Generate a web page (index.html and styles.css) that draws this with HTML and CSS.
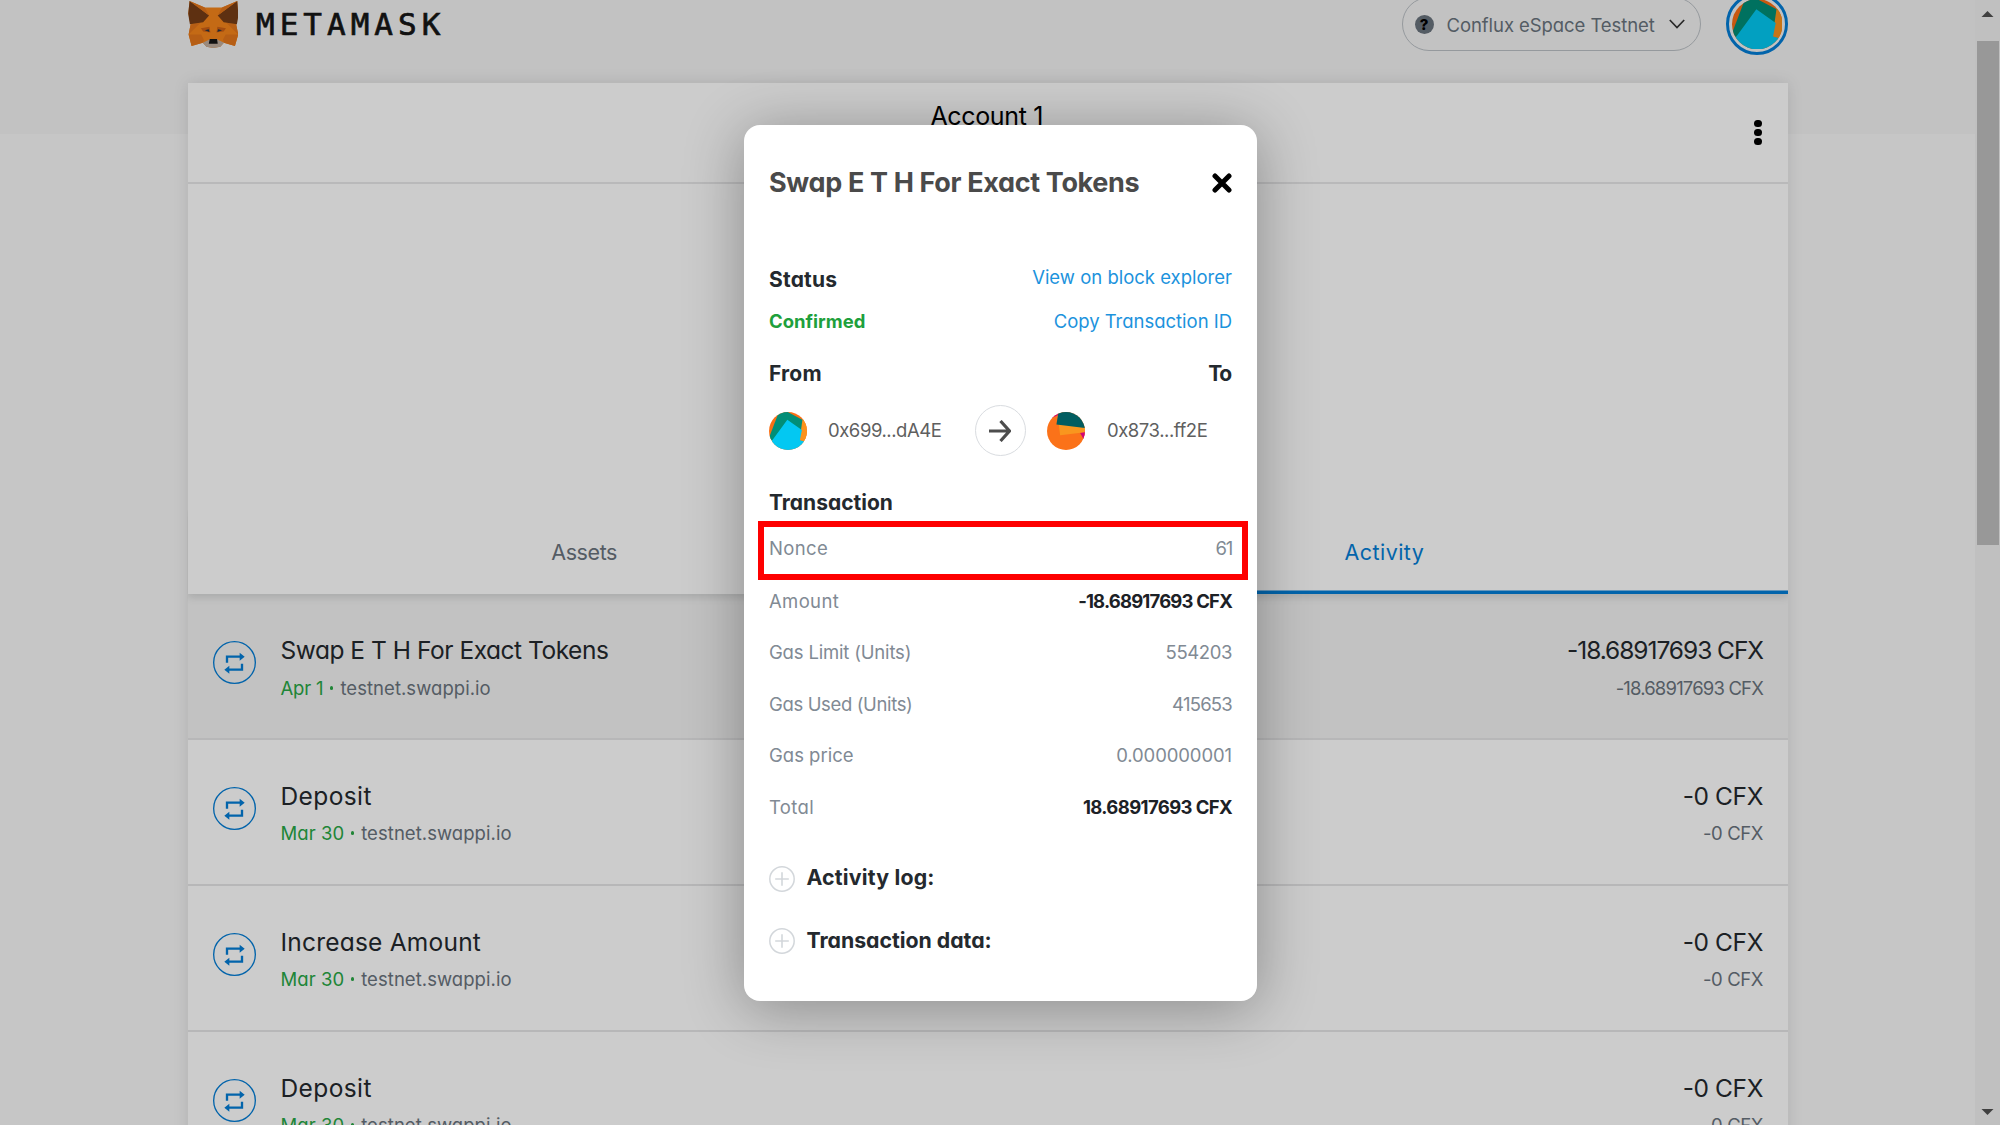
FILE: index.html
```html
<!DOCTYPE html>
<html lang="en">
<head>
<meta charset="utf-8">
<title>MetaMask</title>
<link rel="stylesheet" href="styles.css">
</head>
<body>
<svg width="0" height="0" class="defs">
  <symbol id="swap" viewBox="129 362 129 129">
    <circle cx="193.5" cy="426.5" r="62.5" fill="none" stroke="currentColor" stroke-width="4"/>
    <path d="M171 427V409H213M216 430V448H174" fill="none" stroke="currentColor" stroke-width="7"/>
    <path d="M209 397L224 409L209 421ZM178 436L163 448L178 460Z" fill="currentColor"/>
  </symbol>
  <symbol id="jazz-a" viewBox="86 155 112 112">
    <clipPath id="ca"><circle cx="142" cy="211" r="56"/></clipPath>
    <g clip-path="url(#ca)">
      <path fill="#fb6f14" d="M86 155h112v112H86z"/>
      <path fill="#018e77" d="M84 236L112 163L128 148L187 179L184 215L98 240Z"/>
      <path fill="#fb931d" d="M185 175L205 182L195 243L176 238Z"/>
      <path fill="#03c8f2" d="M140 178L183 208L177 238L198 244V270H86V250L99 234Z"/>
    </g>
  </symbol>
  <symbol id="jazz-b" viewBox="908 155 113 113">
    <clipPath id="cb"><circle cx="964.5" cy="211.5" r="56.5"/></clipPath>
    <g clip-path="url(#cb)">
      <path fill="#fb7219" d="M900 150h130v130H900z"/>
      <path fill="#d10575" d="M915 160L945 150L940 165L924 172ZM1006 217L1025 212L1017 236Z"/>
      <path fill="#f9961e" d="M943 190L1025 200V215L947 224Z"/>
      <path fill="#015d60" d="M943 150L936 192L1025 203V150Z"/>
    </g>
  </symbol>
  <symbol id="plus" viewBox="0 0 26 26">
    <circle cx="13" cy="13" r="12.2" fill="none" stroke="currentColor" stroke-width="1.5"/>
    <path d="M13 6.2V19.8M6.2 13H19.8" stroke="currentColor" stroke-width="1.6"/>
  </symbol>
</svg>

<div class="page">
  <header class="topbar">
    <svg class="fox" viewBox="53 2 151 142">
      <path fill="#f6851b" d="M57 2L103 22H155L201 2L204 40L198 75L204 103L194 138L160 128L150 140L128 144L108 140L97 128L63 138L54 103L60 73L53 40Z"/>
      <path fill="#e4761b" d="M60 73L90 68L54 103ZM198 73L168 68L204 103ZM54 103H92L100 118L97 128L63 138ZM204 103H166L158 118L161 128L194 138Z"/>
      <path fill="#cd6116" d="M91 84L117 80L120 97L98 94ZM167 84L141 80L138 97L160 94Z"/>
      <path fill="#763d16" d="M57 2L116 46L98 66L58 72L55 55L53 40ZM201 2L142 46L160 66L200 72L203 55L204 40Z"/>
      <path fill="#e4761b" d="M57 2L103 22L116 46ZM201 2L155 22L142 46Z"/>
      <path fill="#c0ad9e" d="M97 128L117 118H141L161 128L150 140L128 144L108 140Z"/>
      <path fill="#233447" d="M103 90L115 87L117 96ZM155 90L143 87L141 96Z"/>
      <path fill="#161616" d="M118 117H140L142 131H115Z"/>
    </svg>
    <span class="wordmark">METAMASK</span>
    <div class="network">
      <span class="network-icon">?</span>
      <span class="network-name">Conflux eSpace Testnet</span>
      <svg class="chevron" viewBox="0 0 16 10"><path d="M.8 1L8 8.6L15.2 1" fill="none" stroke="#333" stroke-width="1.7"/></svg>
    </div>
    <div class="account-ring"><svg><use href="#jazz-a"/></svg></div>
  </header>

  <main class="card">
    <div class="account-bar">
      <span class="account-name">Account 1</span>
      <span class="dots"><i></i><i></i><i></i></span>
    </div>
    <div class="balance"></div>
    <div class="tabs">
      <div class="tab assets">Assets</div>
      <div class="tab activity">Activity</div>
    </div>
    <div class="list">
      <div class="row hovered">
        <svg class="row-icon"><use href="#swap"/></svg>
        <div class="row-main"><div class="title tight">Swap E T H For Exact Tokens</div><div class="sub"><span class="date narrow">Apr 1</span><b></b>testnet.swappi.io</div></div>
        <div class="row-amount digits"><div class="title">-18.68917693 CFX</div><div class="sub">-18.68917693 CFX</div></div>
      </div>
      <div class="row">
        <svg class="row-icon"><use href="#swap"/></svg>
        <div class="row-main"><div class="title">Deposit</div><div class="sub"><span class="date">Mar 30</span><b></b>testnet.swappi.io</div></div>
        <div class="row-amount"><div class="title">-0 CFX</div><div class="sub">-0 CFX</div></div>
      </div>
      <div class="row">
        <svg class="row-icon"><use href="#swap"/></svg>
        <div class="row-main"><div class="title increase">Increase Amount</div><div class="sub"><span class="date">Mar 30</span><b></b>testnet.swappi.io</div></div>
        <div class="row-amount"><div class="title">-0 CFX</div><div class="sub">-0 CFX</div></div>
      </div>
      <div class="row">
        <svg class="row-icon"><use href="#swap"/></svg>
        <div class="row-main"><div class="title">Deposit</div><div class="sub"><span class="date">Mar 30</span><b></b>testnet.swappi.io</div></div>
        <div class="row-amount"><div class="title">-0 CFX</div><div class="sub">-0 CFX</div></div>
      </div>
    </div>
  </main>
</div>

<div class="scrollbar">
  <svg viewBox="0 0 12 6"><path d="M6 0L12 6H0Z"/></svg>
  <div class="thumb"></div>
  <svg viewBox="0 0 12 6"><path d="M0 0H12L6 6Z"/></svg>
</div>

<div class="backdrop"></div>

<section class="modal">
  <div class="modal-head">
    <h2>Swap E T H For Exact Tokens</h2>
    <svg class="close" viewBox="0 0 20 20"><path d="M3 3L17 17M17 3L3 17" stroke="#000" stroke-width="5" stroke-linecap="round"/></svg>
  </div>
  <div class="line status"><strong>Status</strong><a>View on block explorer</a></div>
  <div class="line confirm"><span class="ok">Confirmed</span><a class="copy">Copy Transaction ID</a></div>
  <div class="line fromto"><strong>From</strong><strong class="to">To</strong></div>
  <div class="parties">
    <svg class="jazz"><use href="#jazz-a"/></svg>
    <span class="address">0x699...dA4E</span>
    <span class="arrow"><svg viewBox="0 0 22 22"><path d="M0 11H20M11.5 1L20.5 11L11.5 21" fill="none" stroke="#4d4d4d" stroke-width="3.2"/></svg></span>
    <svg class="jazz"><use href="#jazz-b"/></svg>
    <span class="address">0x873...ff2E</span>
  </div>
  <div class="line section"><strong>Transaction</strong></div>
  <div class="item nonce"><span class="wide">Nonce</span><span class="v61">61</span></div>
  <div class="item"><span class="wide">Amount</span><span class="bold">-18.68917693 CFX</span></div>
  <div class="item"><span class="gas">Gas Limit (Units)</span><span class="limit">554203</span></div>
  <div class="item"><span class="gas used">Gas Used (Units)</span><span class="used-value">415653</span></div>
  <div class="item"><span>Gas price</span><span class="price-value">0.000000001</span></div>
  <div class="item"><span class="wide">Total</span><span class="bold total">18.68917693 CFX</span></div>
  <div class="folds">
    <div class="fold"><svg><use href="#plus"/></svg><strong>Activity log:</strong></div>
    <div class="fold"><svg><use href="#plus"/></svg><strong class="data">Transaction data:</strong></div>
  </div>
  <div class="highlight"></div>
</section>
</body>
</html>
```
FILE: styles.css
```css
* { box-sizing: border-box; }
html, body { margin: 0; height: 1125px; overflow: hidden; }
body {
  position: relative;
  background: linear-gradient(#f3f3f3 134px, #f8f8f8 134px);
  font-family: Inter, "Liberation Sans", sans-serif;
  font-feature-settings: "cv11";
  font-size: 18.5px;
  color: #24292e;
}
.defs { position: absolute; }
svg { display: block; flex: none; }

.page { width: 1975px; height: 1125px; overflow: hidden; padding: 0 187px 0 187.5px; }

.topbar { display: flex; align-items: center; height: 48px; margin-bottom: 35px; }
.fox { width: 50.5px; height: 47px; }
.wordmark { margin-left: 18px; font: 31px/49px "DejaVu Sans Mono", monospace; letter-spacing: 5px; color: #161616; -webkit-text-stroke: .7px #161616; flex: 1; }
.network {
  display: flex; align-items: center; width: 299px; height: 54px; margin-right: 25px; flex: none;
  padding: 0 15px 0 12px; border: 1.5px solid #bbc0c5; border-radius: 27px; color: #6a737d;
}
.network-icon { width: 19px; height: 19px; border-radius: 50%; background: #6a737d; color: #000; font-size: 15px; font-weight: 800; line-height: 19px; text-align: center; margin-right: 13px; }
.network-name { letter-spacing: -.07px; white-space: nowrap; flex: 1; padding-top: 1px; }
.chevron { width: 16px; height: 10px; }
.account-ring { width: 62.5px; height: 62.5px; flex: none; margin: -8px 0; border: 3px solid #037dd6; border-radius: 50%; padding: 3px; background: #f3f3f3; }
.account-ring svg { width: 50.5px; height: 50.5px; }

.card { width: 1600.5px; height: 1060px; background: #fff; box-shadow: 0 0 14px rgba(36, 41, 46, .13); }
.account-bar { display: grid; grid-template-columns: 60px 1fr 60px; align-items: center; height: 101px; border-bottom: 2px solid #e8e8e9; }
.account-name { grid-column: 2; padding-bottom: 32.5px; text-align: center; font-size: 25px; letter-spacing: -.35px; color: #000; position: relative; left: -1px; }
.dots { display: flex; flex-direction: column; gap: 1.4px; align-items: center; }
.dots i { width: 7.3px; height: 7.3px; border-radius: 50%; background: #000; }
.balance { height: 326px; }
.tabs { display: flex; height: 84px; position: relative; box-shadow: 0 3px 8px rgba(36, 41, 46, .16); clip-path: inset(0 0 -16px 0); }
.tab { flex: 1; text-align: center; font-size: 21.5px; line-height: 84px; color: #6a737d; padding-right: 7px; }
.assets { letter-spacing: -.42px; }
.activity { letter-spacing: .45px; color: #037dd6; box-shadow: inset 0 -3.5px #037dd6; }

.row { display: flex; height: 146px; border-bottom: 2px solid #e5e5e6; padding: 0 25px; }
.hovered { background: #f3f3f3; }
.row-icon { width: 43px; height: 43px; margin: 46.5px 25px 0 0; color: #037dd6; }
.row-main, .row-amount { padding-top: 37px; line-height: 38px; }
.row-main { flex: 1; }
.row-amount { text-align: right; }
.title { font-size: 24.5px; letter-spacing: .4px; }
.title.tight { letter-spacing: -.47px; }
.title.increase { letter-spacing: .22px; }
.sub { letter-spacing: .05px; color: #6a737d; line-height: 37px; }
.hovered .sub { line-height: 38px; }
.date { color: #28a745; }
.narrow { letter-spacing: -.2px; }
.sub b { display: inline-block; width: 3.6px; height: 3.6px; border-radius: 50%; background: #28a745; margin: 0 7px 5px 6.5px; }
.row-amount .title { letter-spacing: -.4px; }
.row-amount .sub { letter-spacing: -.4px; }
.digits .title { letter-spacing: -1.05px; }
.digits .sub { letter-spacing: -.83px; }

.scrollbar { position: absolute; top: 0; right: 0; width: 25px; height: 1125px; display: flex; flex-direction: column; align-items: center; background: #f1f1f1; padding: 11px 0 10px; }
.scrollbar svg { width: 13px; height: 6px; fill: #505050; }
.thumb { width: 22px; height: 504px; margin: 24px 0 auto; background: #bfbfbf; }

.backdrop { position: absolute; inset: 0; background: rgba(0, 0, 0, .2); }

.modal {
  position: absolute; left: 744px; top: 125px; width: 513px; height: 876px;
  padding: 37.5px 25px 0 25px; border-radius: 16px; background: #fff;
  box-shadow: 0 7px 60px rgba(0, 0, 0, .32);
}
.modal-head { display: flex; justify-content: space-between; align-items: center; height: 40px; margin-bottom: 55px; }
h2 { margin: 0; font-size: 27px; line-height: 42px; letter-spacing: -.35px; color: #4a4a4a; }
.close { width: 20px; height: 20px; }
.line { display: flex; justify-content: space-between; }
.line strong { font-size: 21px; letter-spacing: .2px; }
.line a { color: #1c93dd; }
.status { line-height: 43px; height: 42px; }
.status a { line-height: 39px; }
.confirm { line-height: 43px; height: 44px; }
.confirm a { line-height: 42px; letter-spacing: -.02px; }
.ok { font-weight: 700; color: #1ea03c; }
.fromto { line-height: 59px; }
.line .to { letter-spacing: -1.2px; padding-right: 1px; }
.parties { display: grid; grid-template-columns: 37.5px 168px 72px 60.5px auto; align-items: center; height: 56px; margin-bottom: 24px; }
.jazz { width: 38px; height: 38px; }
.address { padding: 0 0 1.5px 21.5px; letter-spacing: -.45px; color: #5f5f5f; }
.parties .jazz + .address:last-child { padding-left: 0; }
.arrow { display: grid; place-items: center; width: 51px; height: 51px; border: 1.5px solid #d9dce0; border-radius: 50%; }
.arrow svg { width: 22px; height: 22px; }
.section { line-height: 40px; }
.section strong { letter-spacing: 0; }
.item { display: flex; justify-content: space-between; line-height: 51.5px; color: #818a94; }
.nonce { margin-bottom: 1.5px; }
.wide { letter-spacing: .35px; }
.v61 { letter-spacing: -1.2px; }
.gas { letter-spacing: -.18px; }
.limit { letter-spacing: -.4px; }
.used { letter-spacing: -.36px; }
.used-value { letter-spacing: -.76px; }
.price-value { letter-spacing: -.1px; }
.bold { font-weight: 700; color: #1c2126; letter-spacing: -.82px; }
.total { letter-spacing: -.62px; }
.folds { margin-top: 14px; }
.fold { display: flex; align-items: center; height: 62.5px; color: #d3d7db; }
.fold svg { width: 26px; height: 26px; margin: 1px 12px 0 -.5px; }
.fold strong { font-size: 21.3px; letter-spacing: .2px; color: #24292e; padding-bottom: 2px; }
.fold .data { letter-spacing: -.03px; }
.highlight { position: absolute; left: 14px; top: 396px; width: 490px; height: 59px; border: 6px solid #fe0000; }
```
